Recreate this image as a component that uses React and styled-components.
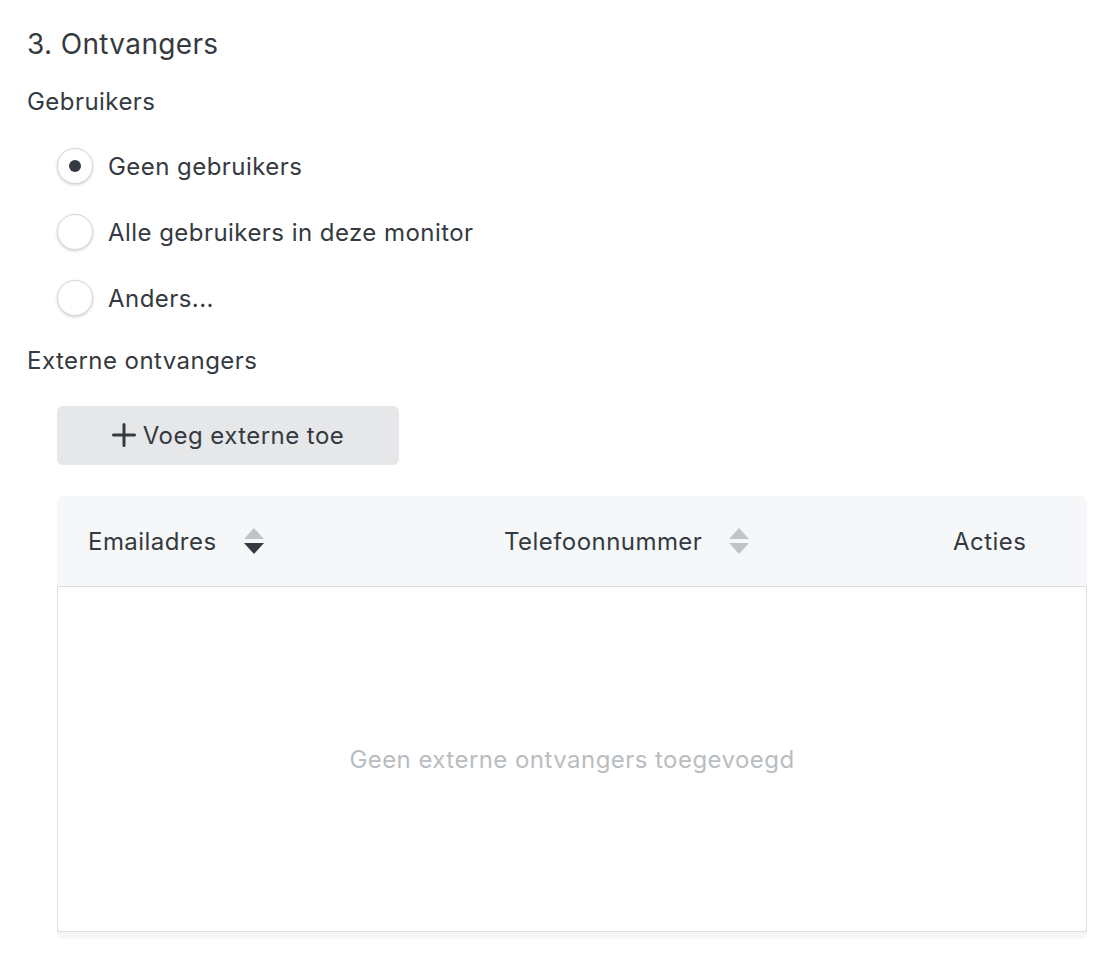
import React, { useState } from 'react';
import styled, { createGlobalStyle } from 'styled-components';

const GlobalStyle = createGlobalStyle`
	body {
		margin: 0;
		background: #ffffff;
		font-family: Inter, 'Noto Sans', sans-serif;
		color: #343a40;
	}
`;

const Page = styled.div`
	padding: 27px 29px 20px 27px;
	display: flex;
	flex-direction: column;
`;

const Title = styled.h2`
	margin: 0;
	font-size: 28px;
	font-weight: 400;
	line-height: 34px;
	letter-spacing: 0.35px;
`;

const Label = styled.div`
	font-size: 24px;
	letter-spacing: 0.45px;
	line-height: 30px;
	margin-top: ${(p) => p.top}px;
`;

const RadioList = styled.div`
	display: flex;
	flex-direction: column;
	gap: 30px;
	padding-left: 30px;
	margin-top: 31px;
`;

const RadioRow = styled.label`
	display: flex;
	align-items: center;
	gap: 15px;
	height: 36px;
	font-size: 24px;
	letter-spacing: 0.45px;
	cursor: pointer;
`;

const RadioCircle = styled.span`
	width: 36px;
	height: 36px;
	box-sizing: border-box;
	border-radius: 50%;
	border: 1px solid #d6d6d6;
	background: #fff;
	box-shadow: 0 1px 3px rgba(0, 0, 0, 0.18);
	display: flex;
	align-items: center;
	justify-content: center;
	flex-shrink: 0;

	&::after {
		content: '';
		width: 12px;
		height: 12px;
		border-radius: 50%;
		background: #343a40;
		display: ${(p) => (p.checked ? 'block' : 'none')};
	}
`;

const AddButton = styled.button`
	margin: 30px 0 0 30px;
	width: 342px;
	height: 59px;
	border: none;
	border-radius: 6px;
	background: #e6e7e9;
	color: #343a40;
	font-family: inherit;
	font-size: 24px;
	letter-spacing: 0.45px;
	display: flex;
	align-items: center;
	justify-content: center;
	gap: 7px;
	cursor: pointer;
`;

const PlusIcon = styled.svg`
	width: 24px;
	height: 24px;
	flex-shrink: 0;
	margin-top: -2px;
`;

const Table = styled.div`
	margin: 31px 0 0 30px;
	width: 1030px;
	background: #f6f7f9;
	border-radius: 6px;
	display: flex;
	flex-direction: column;
`;

const HeadRow = styled.div`
	display: grid;
	grid-template-columns: 416px 449px 1fr;
	height: 90px;
	align-items: center;
`;

const HeadCell = styled.div`
	padding-left: 31px;
	display: flex;
	align-items: center;
	gap: 27px;
	font-size: 24px;
	letter-spacing: 0.45px;
`;

const SortIcon = styled.svg`
	width: 20px;
	height: 29px;
	flex-shrink: 0;
`;

const Body = styled.div`
	height: 346px;
	box-sizing: border-box;
	background: #fff;
	border: 1px solid #dcdee2;
	display: flex;
	align-items: center;
	justify-content: center;
`;

const Empty = styled.div`
	font-size: 24px;
	letter-spacing: 0.45px;
	color: #b9bdc1;
`;

const Foot = styled.div`
	height: 7px;
`;

function Sort({ active }) {
	return (
		<SortIcon viewBox="0 0 20 29">
			<polygon points="10,1 20,12 0,12" fill={active === 'up' ? '#343a40' : '#c0c4c6'} />
			<polygon points="0,16 20,16 10,27" fill={active === 'down' ? '#343a40' : '#c0c4c6'} />
		</SortIcon>
	);
}

const options = ['Geen gebruikers', 'Alle gebruikers in deze monitor', 'Anders...'];

export default function App() {
	const [choice, setChoice] = useState(0);

	return (
		<Page>
			<GlobalStyle />
			<Title>3. Ontvangers</Title>
			<Label top={26}>Gebruikers</Label>
			<RadioList>
				{options.map((o, i) => (
					<RadioRow key={o} onClick={() => setChoice(i)}>
						<RadioCircle checked={choice === i} />
						{o}
					</RadioRow>
				))}
			</RadioList>
			<Label top={30}>Externe ontvangers</Label>
			<AddButton>
				<PlusIcon viewBox="0 0 24 24">
					<path d="M12 1.5v21M1.5 12h21" stroke="#343a40" strokeWidth="3" strokeLinecap="round" fill="none" />
				</PlusIcon>
				Voeg externe toe
			</AddButton>
			<Table>
				<HeadRow>
					<HeadCell>
						Emailadres
						<Sort active="down" />
					</HeadCell>
					<HeadCell>
						Telefoonnummer
						<Sort />
					</HeadCell>
					<HeadCell>Acties</HeadCell>
				</HeadRow>
				<Body>
					<Empty>Geen externe ontvangers toegevoegd</Empty>
				</Body>
				<Foot />
			</Table>
		</Page>
	);
}
